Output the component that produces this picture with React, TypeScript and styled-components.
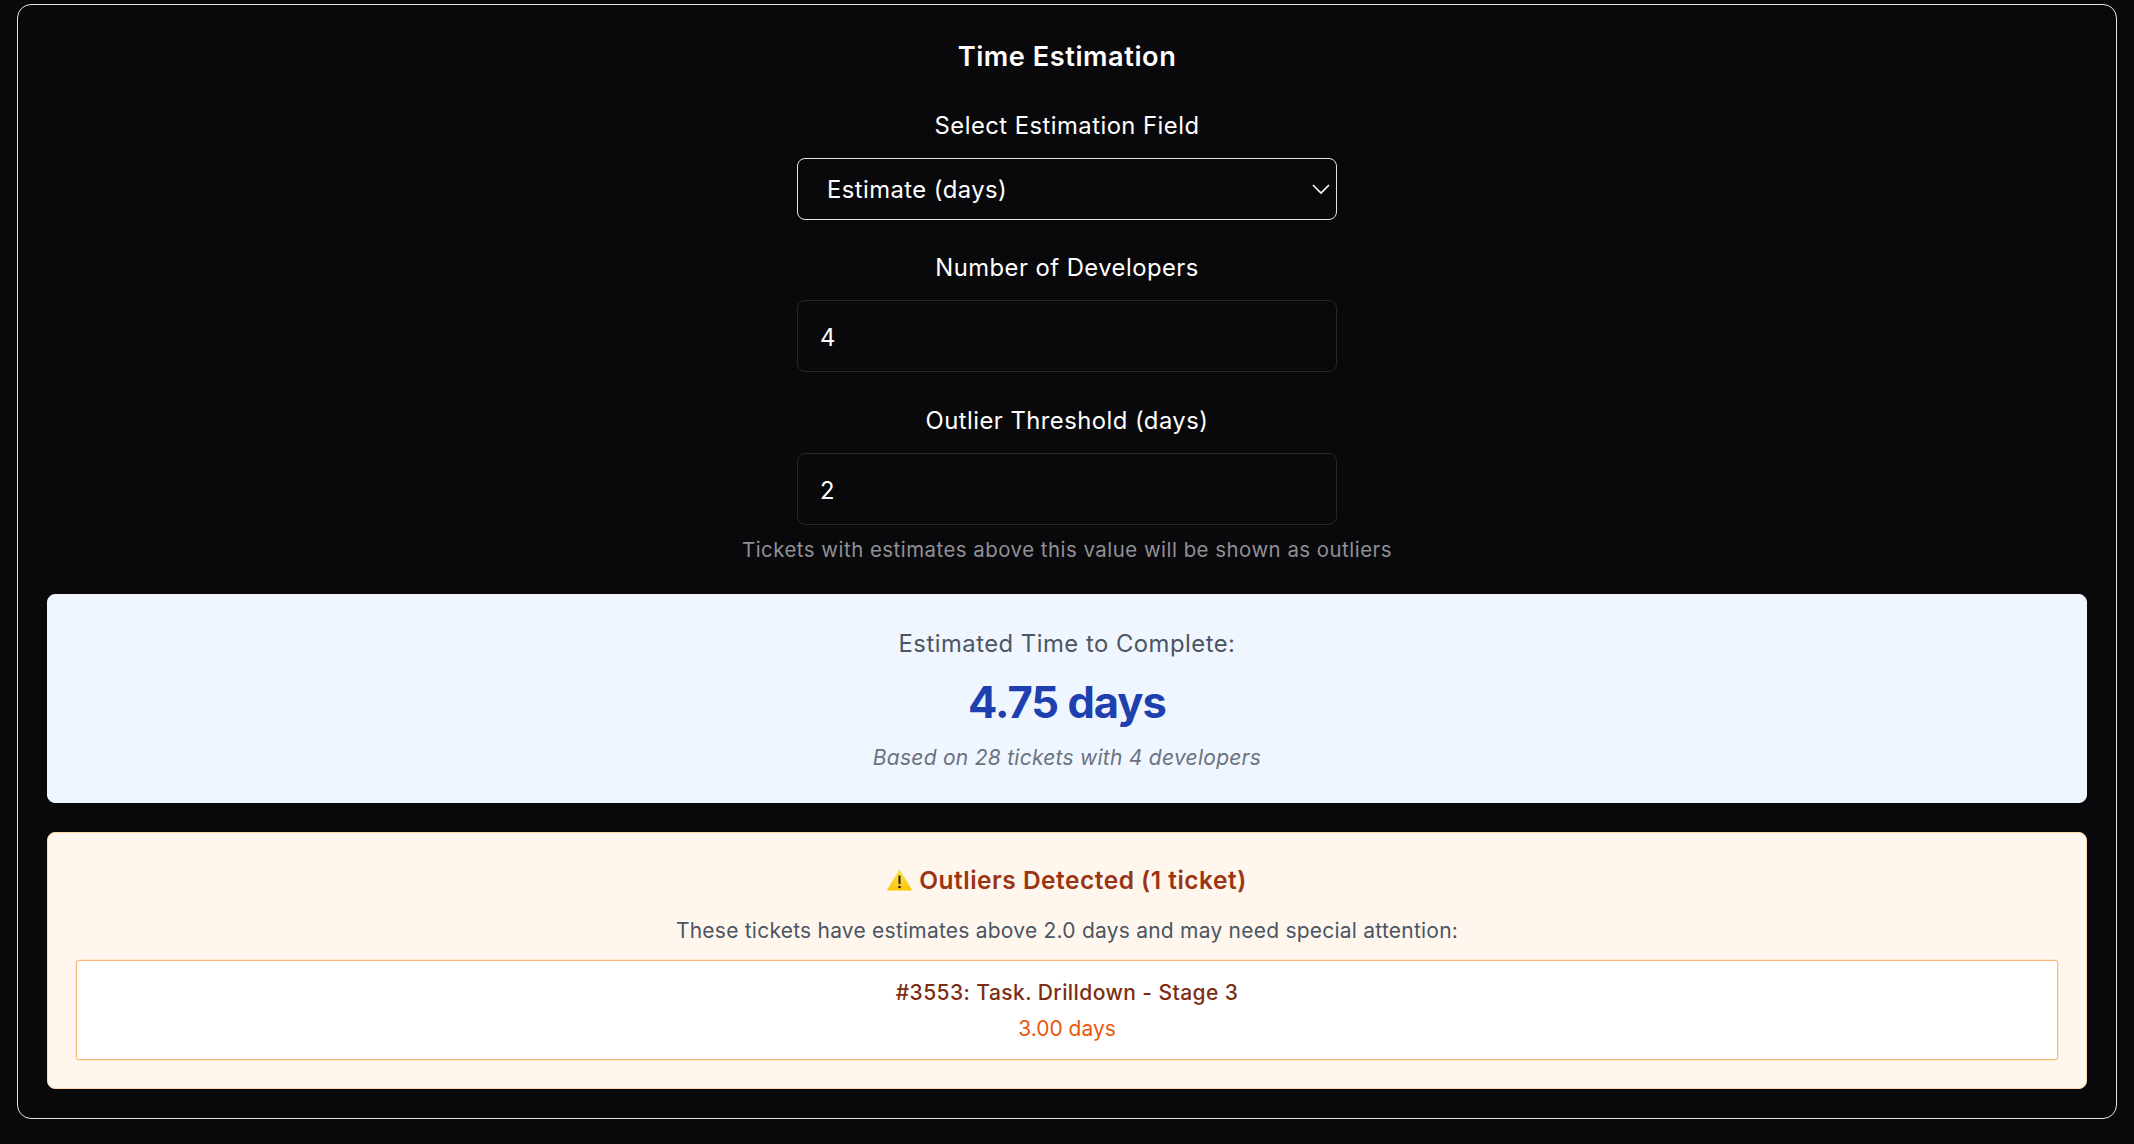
import styled, { createGlobalStyle } from "styled-components";

const GlobalStyle = createGlobalStyle`
  html, body {
    margin: 0;
    background: #09090b;
  }
  body {
    font-family: Inter, "Liberation Sans", sans-serif;
    color: #ffffff;
  }
`;

const Page = styled.div`
  padding: 4px 17px 25px;
`;

const Panel = styled.section`
  box-sizing: border-box;
  height: 1115px;
  padding: 0 29px;
  border: 1px solid #e4e4e7;
  border-radius: 14px;
  display: flex;
  flex-direction: column;
  align-items: center;
`;

const Title = styled.h2`
  margin: 34px 0 0;
  font-size: 27.2px;
  line-height: 36px;
  font-weight: 600;
  letter-spacing: 0.54px;
`;

const Field = styled.div<{ $top: number }>`
  width: 540px;
  margin-top: ${(p) => p.$top}px;
  display: flex;
  flex-direction: column;
  align-items: center;
`;

const Label = styled.label`
  font-size: 23.8px;
  line-height: 34px;
  margin-bottom: 15px;
  letter-spacing: 0.47px;
`;

const SelectWrap = styled.div`
  position: relative;
  width: 100%;
`;

const Select = styled.select`
  box-sizing: border-box;
  display: block;
  width: 100%;
  height: 62px;
  padding: 0 29px;
  appearance: none;
  background: transparent;
  border: 1px solid #e4e4e7;
  border-radius: 8px;
  color: #fff;
  font: 400 23.8px Inter, sans-serif;
  letter-spacing: 0.45px;
`;

const Chevron = styled.svg`
  position: absolute;
  right: 6px;
  top: 25px;
  width: 20px;
  height: 12px;
  pointer-events: none;
`;

const NumberInput = styled.input`
  box-sizing: border-box;
  display: block;
  width: 100%;
  height: 72px;
  padding: 2px 22px 0;
  background: #09090b;
  border: 1px solid #27272a;
  border-radius: 8px;
  color: #fff;
  font: 400 23.8px Inter, sans-serif;
  outline: none;
`;

const Hint = styled.p`
  margin: 12px 0 0;
  white-space: nowrap;
  font-size: 20.4px;
  line-height: 26px;
  letter-spacing: 0.5px;
  color: #909097;
`;

const Card = styled.div<{ $bg: string; $top: number; $height: number; $edge: string }>`
  box-sizing: border-box;
  width: 100%;
  height: ${(p) => p.$height}px;
  margin-top: ${(p) => p.$top}px;
  border-radius: 8px;
  background: ${(p) => p.$bg};
  border: 1px solid ${(p) => p.$edge};
  display: flex;
  flex-direction: column;
  align-items: center;
`;

const EstimateLabel = styled.div`
  margin-top: 33px;
  font-size: 23.8px;
  line-height: 32px;
  letter-spacing: 0.5px;
  color: #4b5563;
`;

const EstimateValue = styled.div`
  margin-top: 15px;
  font-size: 43.5px;
  line-height: 54px;
  font-weight: 700;
  letter-spacing: -1px;
  color: #1e40af;
`;

const EstimateNote = styled.div`
  margin-top: 15px;
  font-size: 21px;
  line-height: 28px;
  font-style: italic;
  letter-spacing: 0.26px;
  color: #6b7280;
`;

const OutlierHeading = styled.h3`
  margin: 30px 0 0;
  display: flex;
  align-items: center;
  gap: 7px;
  font-size: 24.5px;
  line-height: 34px;
  font-weight: 600;
  letter-spacing: 0.5px;
  color: #9a3412;
`;

const OutlierText = styled.p`
  margin: 20px 0 0;
  font-size: 21px;
  line-height: 28px;
  letter-spacing: 0.23px;
  color: #4b5563;
`;

const TicketBox = styled.div`
  box-sizing: border-box;
  align-self: stretch;
  height: 100px;
  margin: 15px 28px 0;
  padding-top: 18px;
  background: #fff;
  border: 1px solid #fdba74;
  box-shadow: 0 0 0 0.5px #fed7aa;
  border-radius: 3px;
  text-align: center;
`;

const TicketName = styled.div`
  font-size: 21px;
  line-height: 28px;
  font-weight: 500;
  letter-spacing: 0.42px;
  color: #7c2d12;
`;

const TicketDays = styled.div`
  margin-top: 8px;
  font-size: 21px;
  line-height: 28px;
  color: #ea580c;
`;

const WarningIcon = () => (
  <svg width="25" height="22" viewBox="0 0 25 22" aria-hidden="true">
    <defs>
      <linearGradient id="warn" x1="0" y1="0" x2="0" y2="1">
        <stop offset="0" stopColor="#ffe15c" />
        <stop offset="1" stopColor="#fcc600" />
      </linearGradient>
    </defs>
    <path
      d="M12.5 .8 Q13 .8 13.4 1.5 L24.6 20.2 Q25.2 21.6 23.8 21.6 L1.2 21.6 Q-.2 21.6 .4 20.2 L11.6 1.5 Q12 .8 12.5 .8 Z"
      fill="url(#warn)"
    />
    <path d="M12.5 6.5 V15" stroke="#1d1d1b" strokeWidth="2" />
    <circle cx="12.5" cy="18" r="1.3" fill="#1d1d1b" />
  </svg>
);

export default function App() {
  return (
    <Page>
      <GlobalStyle />
      <Panel>
        <Title>Time Estimation</Title>

        <Field $top={34}>
          <Label>Select Estimation Field</Label>
          <SelectWrap>
            <Select defaultValue="estimate">
              <option value="estimate">Estimate (days)</option>
            </Select>
            <Chevron viewBox="0 0 20 12" fill="none" stroke="#fff" strokeWidth="1.6">
              <path d="M2 2 L10 10 L18 2" />
            </Chevron>
          </SelectWrap>
        </Field>

        <Field $top={31}>
          <Label>Number of Developers</Label>
          <NumberInput type="text" defaultValue="4" />
        </Field>

        <Field $top={32}>
          <Label>Outlier Threshold (days)</Label>
          <NumberInput type="text" defaultValue="2" />
          <Hint>Tickets with estimates above this value will be shown as outliers</Hint>
        </Field>

        <Card $bg="#eff6ff" $edge="#eff6ff" $top={31} $height={209}>
          <EstimateLabel>Estimated Time to Complete:</EstimateLabel>
          <EstimateValue>4.75 days</EstimateValue>
          <EstimateNote>Based on 28 tickets with 4 developers</EstimateNote>
        </Card>

        <Card $bg="#fff7ed" $edge="#fed7aa" $top={29} $height={257}>
          <OutlierHeading>
            <WarningIcon />
            Outliers Detected (1 ticket)
          </OutlierHeading>
          <OutlierText>These tickets have estimates above 2.0 days and may need special attention:</OutlierText>
          <TicketBox>
            <TicketName>#3553: Task. Drilldown - Stage 3</TicketName>
            <TicketDays>3.00 days</TicketDays>
          </TicketBox>
        </Card>
      </Panel>
    </Page>
  );
}
